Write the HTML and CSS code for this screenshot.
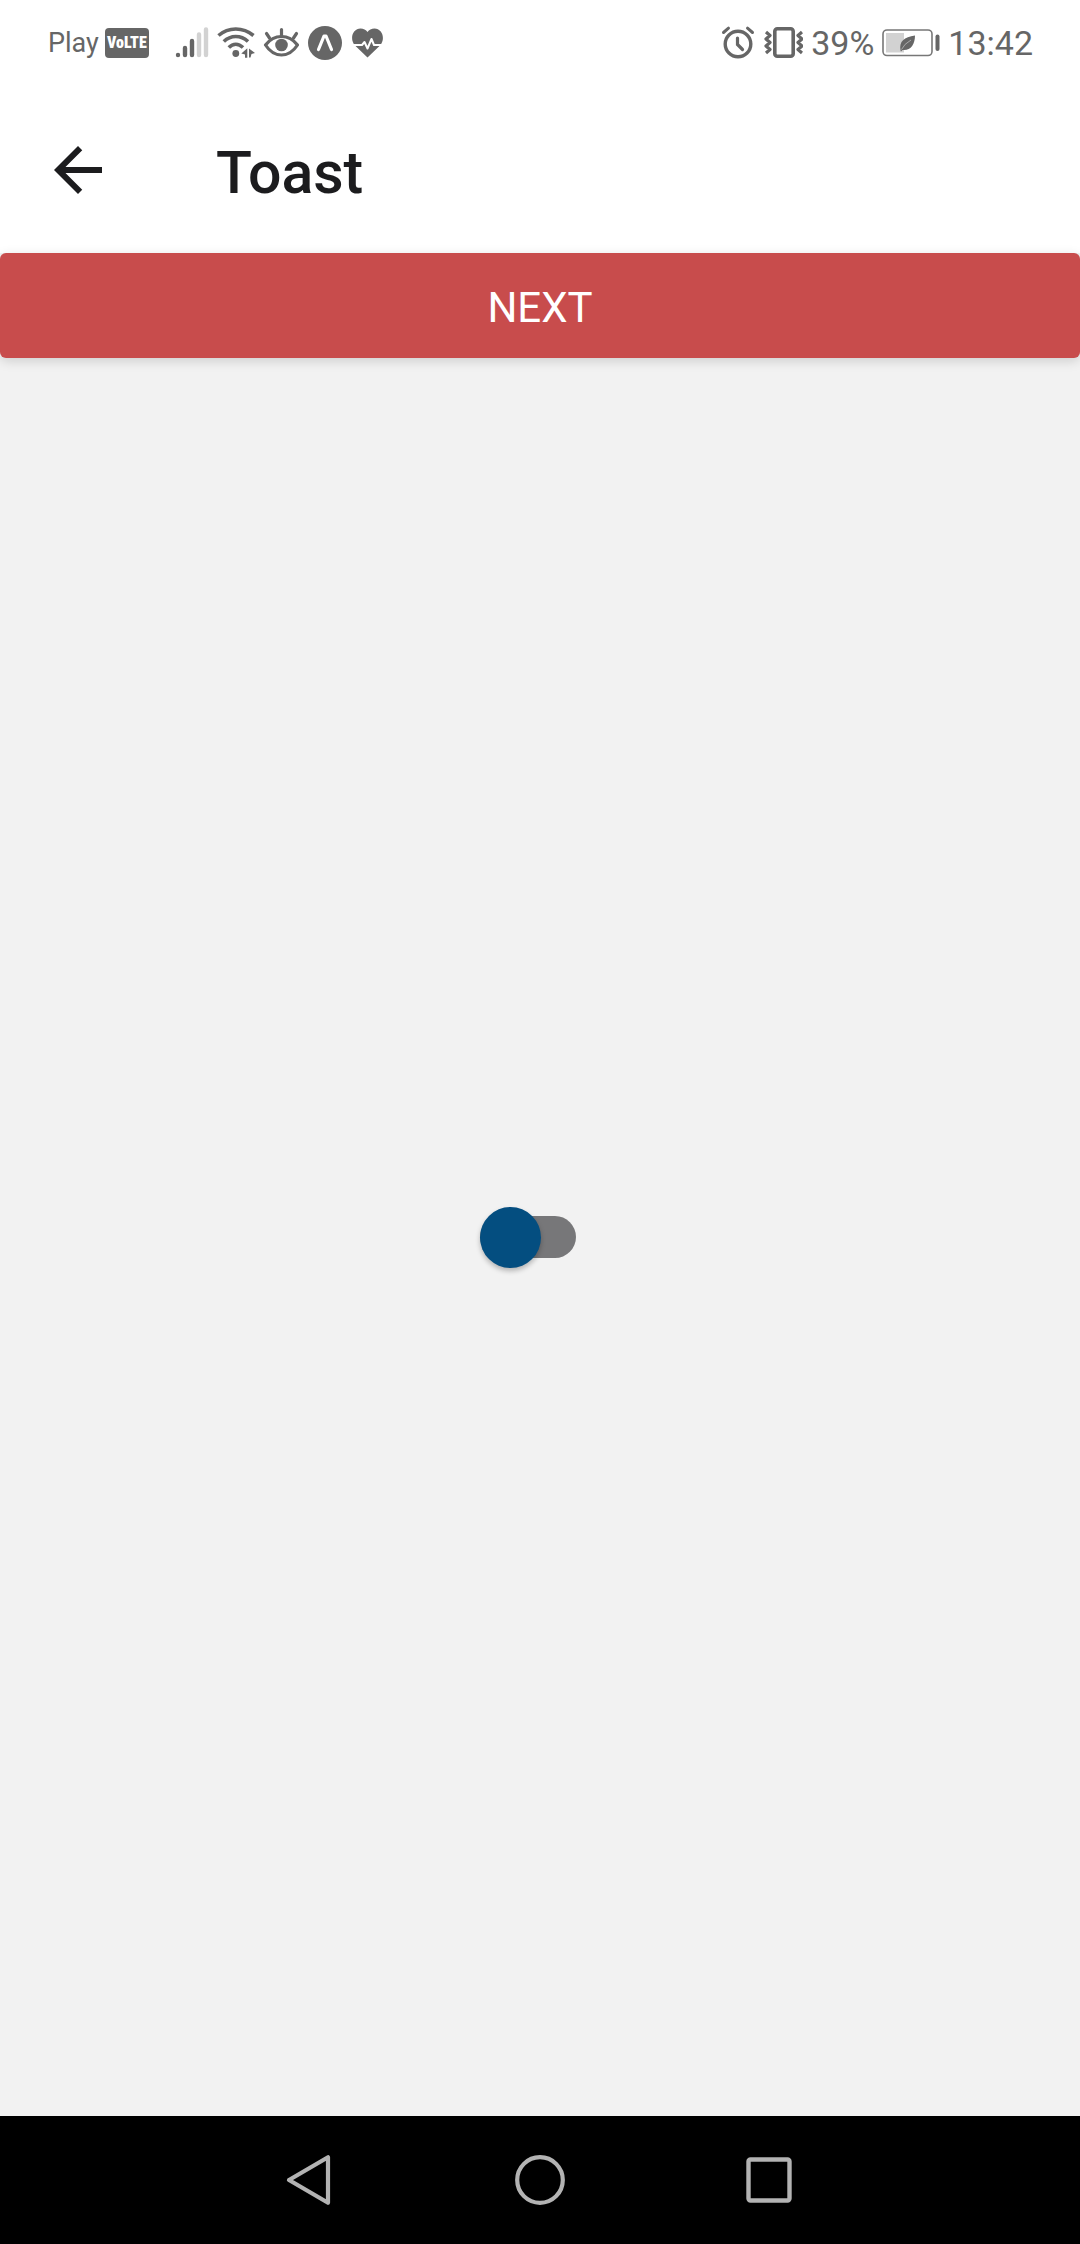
FILE: index.html
```html
<!DOCTYPE html>
<html lang="en">
<head>
  <meta charset="utf-8">
  <meta name="viewport" content="width=device-width, initial-scale=1">
  <title>Toast</title>
  <link rel="stylesheet" href="styles.css">
</head>
<body>
  <div class="status-bar">
    <div class="status-group">
      <div class="network">
        <span class="carrier">Play</span>
        <span class="volte">VoLTE</span>
      </div>
      <svg class="icon" width="34" height="36" viewBox="0 0 34 36" aria-hidden="true">
        <g stroke-width="4.4" stroke-linecap="round">
          <path d="M3 30v0M10 30v-7M17 30v-14" stroke="#666"/>
          <path d="M24 30v-20.500M31 30v-25.500" stroke="#d2d2d2"/>
        </g>
      </svg>
      <svg class="icon" width="38" height="36" viewBox="0 0 38 36" aria-hidden="true">
        <g fill="none" stroke="#666" stroke-width="3.600">
          <path d="M1.500 10.500Q9 4 18.800 4T36.500 10.500"/>
          <path d="M6.800 16.500Q12 11.500 18.800 11.500T31 16.500"/>
          <path d="M11.800 22.500Q15 19.200 18.800 19.200T26 22.500"/>
        </g>
        <circle cx="18.800" cy="28.500" r="3.400" fill="#666"/>
        <path d="M24.300 28.500l6-5.200v9.500h-2.300v-3.300zM32 23.500l6 4.500-3.500 1-1 3.500h-1.500z" fill="#666"/>
      </svg>
      <svg class="icon" width="36" height="36" viewBox="0 0 36 36" aria-hidden="true">
        <g fill="none" stroke="#666" stroke-width="3.200" stroke-linecap="round">
          <path d="M2.500 20Q9 11.500 18.500 11.500T34.500 20Q28 30 18.500 30T2.500 20z" stroke-linejoin="round"/>
          <path d="M18.500 11V4.500M6.500 13L3.500 8.500M30.500 13L33.500 8.500"/>
        </g>
        <circle cx="18.500" cy="20" r="6.300" fill="#666"/>
      </svg>
      <svg class="icon" width="36" height="36" viewBox="0 0 36 36" aria-hidden="true">
        <circle cx="18" cy="18" r="17" fill="#666"/>
        <path d="M11.500 24.500L17 11h2l5.500 13.500" fill="none" stroke="#fff" stroke-width="3.200" stroke-linecap="round" stroke-linejoin="round"/>
      </svg>
      <svg class="icon" width="34" height="36" viewBox="0 0 34 36" aria-hidden="true">
        <path d="M16.500 32.500L4 20.500C-2 13.500 2 3.500 9.500 3.500c3 0 5.500 1.500 7 3.500 1.500-2 4-3.500 7-3.500 7.500 0 11.500 10 5.500 17z" fill="#666"/>
        <path d="M0 20h11l2.500-3 3 6.500 4-9.500 2.500 6H34" fill="none" stroke="#fff" stroke-width="2" stroke-linejoin="round"/>
      </svg>
    </div>
    <div class="status-group">
      <svg class="icon" width="34" height="36" viewBox="0 0 34 36" aria-hidden="true">
        <g fill="none" stroke="#666" stroke-linecap="round">
          <circle cx="17" cy="19" r="12.800" stroke-width="3.400"/>
          <path d="M16.500 13v6.500l5 5" stroke-width="3.200"/>
          <path d="M2.500 7.500l5-4.300M31.500 7.500l-5-4.300" stroke-width="3"/>
        </g>
      </svg>
      <svg class="icon" width="40" height="36" viewBox="0 0 40 36" aria-hidden="true">
        <g fill="none" stroke="#666" stroke-linejoin="round">
          <rect x="11.800" y="3.700" width="18.400" height="27.600" rx="2.500" stroke-width="3.600"/>
          <path d="M3 7l4 3.500-4 3.500 4 3.500-4 3.500 4 3.500-4 3.500M39 7l-4 3.500 4 3.500-4 3.500 4 3.500-4 3.500 4 3.500" stroke-width="3.200"/>
        </g>
      </svg>
      <span class="reading">39%</span>
      <svg class="icon" width="58" height="36" viewBox="0 0 58 36" aria-hidden="true">
        <rect x="1" y="5" width="49" height="25.500" rx="4" fill="#fff" stroke="#777" stroke-width="1.600"/>
        <path d="M4 8h18v19.500H4z" fill="#d2d2d2"/>
        <path d="M18.500 25.500C17 16 22 12.500 33 10.500c0 9-4.500 15.500-12.500 14.500l-1.500 1.500z" fill="#666"/>
        <path d="M19.500 24.500Q22 19 29 15" stroke="#aaa" stroke-width="1" fill="none"/>
        <rect x="53.500" y="9.500" width="4" height="16.500" rx="2" fill="#666"/>
      </svg>
      <time class="reading">13:42</time>
    </div>
  </div>

  <header class="app-header">
    <button class="back" type="button" aria-label="Back">
      <svg width="72" height="72" viewBox="0 0 24 24" aria-hidden="true">
        <path d="M20 11H7.830l5.590-5.590L12 4l-8 8 8 8 1.410-1.410L7.830 13H20z" fill="#1c1c1e"/>
      </svg>
    </button>
    <h1 class="title">Toast</h1>
  </header>

  <button class="next" type="button">NEXT</button>

  <main class="content">
    <input class="switch" type="checkbox" role="switch" aria-label="Show toast">
  </main>

  <nav class="nav-bar" aria-label="System">
    <button class="nav-button" type="button" aria-label="Back">
      <svg width="72" height="72" viewBox="0 0 72 72" aria-hidden="true">
        <path d="M15 36L54 13.200v45.600z" fill="none" stroke="#b3b3b3" stroke-width="4.200" stroke-linejoin="round"/>
      </svg>
    </button>
    <button class="nav-button" type="button" aria-label="Home">
      <svg width="72" height="72" viewBox="0 0 72 72" aria-hidden="true">
        <circle cx="36" cy="36" r="22.800" fill="none" stroke="#b3b3b3" stroke-width="4.200"/>
      </svg>
    </button>
    <button class="nav-button" type="button" aria-label="Recent apps">
      <svg width="72" height="72" viewBox="0 0 72 72" aria-hidden="true">
        <rect x="14.500" y="15.500" width="41" height="41" rx="2" fill="none" stroke="#b3b3b3" stroke-width="4.400"/>
      </svg>
    </button>
  </nav>
</body>
</html>
```

FILE: styles.css
```css
* {
  box-sizing: border-box;
}

body {
  display: flex;
  flex-direction: column;
  min-height: 100vh;
  margin: 0;
  background: #f2f2f2;
  font-family: Roboto, "Liberation Sans", sans-serif;
}

button {
  padding: 0;
  border: 0;
  background: none;
  font-family: inherit;
  cursor: pointer;
}

svg {
  display: block;
}

.status-bar {
  display: flex;
  justify-content: space-between;
  align-items: center;
  height: 86px;
  padding: 0 47px 0 48px;
  background: #fff;
  color: #666;
}

.status-group {
  display: flex;
  align-items: center;
  gap: 8px;
}

.network {
  display: flex;
  align-items: center;
  gap: 6px;
  margin-right: 18px;
}

.icon {
  flex: none;
}

.carrier {
  font-size: 27px;
  line-height: 36px;
}

.volte {
  width: 44px;
  border-radius: 4px;
  background: #666;
  color: #fff;
  font-family: "Roboto Condensed", "Liberation Sans Narrow", Roboto, sans-serif;
  font-size: 16px;
  font-weight: 900;
  line-height: 30px;
  text-align: center;
}

.reading {
  font-size: 34px;
  line-height: 40px;
}

.app-header {
  display: flex;
  align-items: center;
  gap: 102px;
  height: 167px;
  padding: 0 42px;
  background: #fff;
}

.title {
  margin: 0;
  padding-top: 6px;
  color: #1c1c1e;
  font-size: 59px;
  font-weight: 500;
  line-height: 72px;
}

.next {
  height: 105px;
  padding-top: 4px;
  border-radius: 6px;
  background: #c84c4c;
  box-shadow: 0 3px 12px rgba(0, 0, 0, 0.15);
  color: #fff;
  font-size: 42px;
  line-height: 48px;
}

.content {
  display: flex;
  flex: 1;
  align-items: center;
  justify-content: center;
}

.switch {
  display: grid;
  align-items: center;
  width: 120px;
  height: 61px;
  margin: 0;
  appearance: none;
  cursor: pointer;
}

.switch::before,
.switch::after {
  grid-area: 1 / 1;
  content: "";
}

.switch::before {
  width: 96px;
  height: 42px;
  border-radius: 21px;
  background: #777779;
}

.switch::after {
  width: 61px;
  height: 61px;
  border-radius: 50%;
  background: #044e80;
  box-shadow: 0 3px 5px rgba(0, 0, 0, 0.25);
}

.switch:checked::after {
  margin-left: 35px;
}

.nav-bar {
  display: flex;
  align-items: center;
  justify-content: center;
  gap: 158px;
  height: 128px;
  background: #000;
}
```
